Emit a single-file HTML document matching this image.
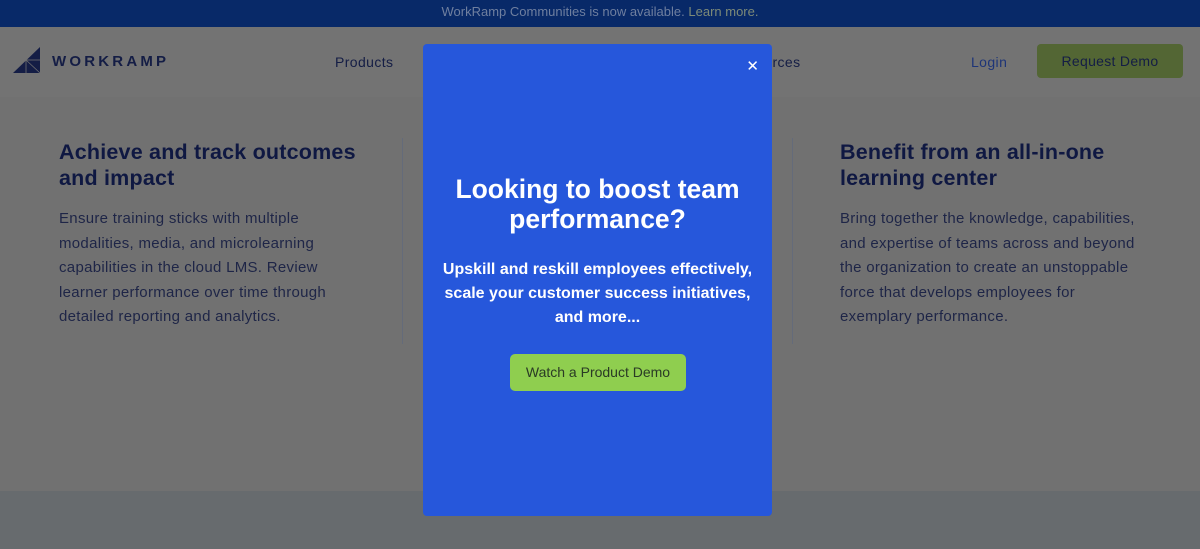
<!DOCTYPE html>
<html><head><meta charset="utf-8"><style>
*{margin:0;padding:0;box-sizing:border-box}
body{width:1200px;height:549px;overflow:hidden;background:#717171;font-family:"Liberation Sans",sans-serif;position:relative}
.top{position:absolute;left:0;top:0;width:1200px;height:27px;background:#082968;color:#6f7f9f;font-size:13px;text-align:center;line-height:24px}
.nav{position:absolute;top:27px;left:0;width:1200px;height:70px;background:#737373}
.logo{position:absolute;left:13px;top:47px}
.logotxt{position:absolute;left:52px;top:53px;font-size:15px;font-weight:bold;letter-spacing:3.2px;color:#141d45}
.navl{position:absolute;top:54px;font-size:14px;color:#141d45;letter-spacing:0.4px}
.btn{position:absolute;left:1037px;top:44px;width:146px;height:34px;background:#536634;border-radius:4px;color:#141d45;font-size:14px;text-align:center;line-height:34px;letter-spacing:0.3px}
h3{position:absolute;font-size:21.5px;color:#0f1842;line-height:26px;font-weight:bold;letter-spacing:0.2px}
p.b{position:absolute;font-size:15px;color:#1e2547;line-height:24.5px;letter-spacing:0.3px}
.vl{position:absolute;top:138px;width:1px;height:206px;background:#646b7a}
.band{position:absolute;left:0;top:491px;width:1200px;height:58px;background:#676b6e}
.modal{position:absolute;left:423px;top:44px;width:349px;height:472px;background:#2657db;border-radius:4px;color:#fff;text-align:center}
.x{position:absolute;right:13px;top:13px;font-size:15px}
.mh{position:absolute;top:130px;left:0;width:349px;font-size:26.5px;font-weight:bold;line-height:30px}
.mp{position:absolute;top:214px;left:0;width:349px;font-size:16px;font-weight:bold;line-height:24px}
.mb{position:absolute;left:87px;top:310px;width:176px;height:37px;background:#8fce4f;border-radius:5px;color:#2a3a25;font-size:14px;line-height:37px}
</style></head><body>
<div class="top">WorkRamp Communities is now available. <span style="color:#7d8a78">Learn more.</span></div>
<div class="nav"></div>
<svg class="logo" width="28" height="27" viewBox="0 0 28 27"><polygon points="27,0 27,26 0,26" fill="#141d45"/><line x1="13" y1="13" x2="27" y2="26" stroke="#6f6f6f" stroke-width="0.8"/><line x1="13" y1="13" x2="13" y2="26" stroke="#6f6f6f" stroke-width="0.8"/><line x1="13" y1="13" x2="27" y2="13" stroke="#6f6f6f" stroke-width="0.8"/></svg>
<div class="logotxt">WORKRAMP</div>
<div class="navl" style="left:335px">Products</div>
<div class="navl" style="left:730px">Resources</div>
<div class="navl" style="left:971px;color:#1e3578">Login</div>
<div class="btn">Request Demo</div>
<h3 style="left:59px;top:139px">Achieve and track outcomes<br>and impact</h3>
<p class="b" style="left:59px;top:207px">Ensure training sticks with multiple<br>modalities, media, and microlearning<br>capabilities in the cloud LMS. Review<br>learner performance over time through<br>detailed reporting and analytics.</p>
<div class="vl" style="left:402px"></div>
<div class="vl" style="left:792px"></div>
<h3 style="left:840px;top:139px">Benefit from an all-in-one<br>learning center</h3>
<p class="b" style="left:840px;top:207px">Bring together the knowledge, capabilities,<br>and expertise of teams across and beyond<br>the organization to create an unstoppable<br>force that develops employees for<br>exemplary performance.</p>
<div class="band"></div>
<div class="modal">
<div class="x">✕</div>
<div class="mh">Looking to boost team<br>performance?</div>
<div class="mp">Upskill and reskill employees effectively,<br>scale your customer success initiatives,<br>and more...</div>
<div class="mb">Watch a Product Demo</div>
</div>
</body></html>
